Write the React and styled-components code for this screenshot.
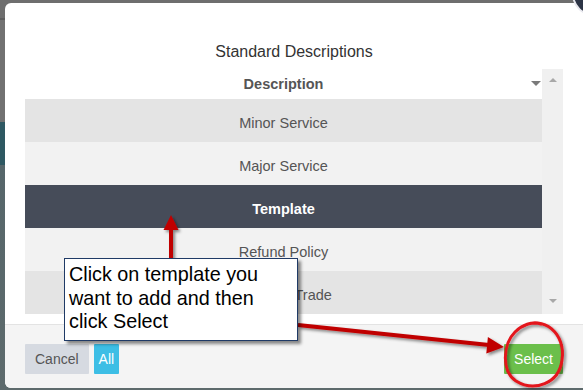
import React from "react";
import styled, { createGlobalStyle } from "styled-components";

const Global = createGlobalStyle`
  html, body { margin: 0; padding: 0; }
  body { font-family: "Liberation Sans", Arial, sans-serif; overflow: hidden; }
`;

const Backdrop = styled.div`
  position: relative;
  width: 583px;
  height: 390px;
  overflow: hidden;
  padding: 3px 0 0 5px;
  box-sizing: border-box;
  background:
    linear-gradient(to bottom,
      #6e6e6e 0px, #6e6e6e 18px, #5e5e5e 18px, #5e5e5e 20px,
      #717171 20px, #717171 122px, #2e5862 122px, #2e5862 165px,
      #56666a 165px, #5d6a6c 390px);
`;

const Modal = styled.div`
  width: 578px;
  height: 385px;
  background: #fff;
  border-radius: 6px 0 0 6px;
  display: flex;
  flex-direction: column;
  overflow: hidden;
`;

const Body = styled.div`
  padding: 39px 20px 0 20px;
  display: flex;
  flex-direction: column;
  flex-shrink: 0;
`;

const Title = styled.div`
  font-size: 16px;
  line-height: 20px;
  color: #333;
  text-align: center;
  margin-bottom: 7px;
`;

const GridWrap = styled.div`
  display: flex;
  height: 245px;
  flex-shrink: 0;
`;

const Table = styled.div`
  flex: 1;
  display: flex;
  flex-direction: column;
`;

const HeaderRow = styled.div`
  position: relative;
  height: 30px;
  flex-shrink: 0;
  display: flex;
  align-items: center;
  justify-content: center;
  font-size: 14.5px;
  font-weight: bold;
  color: #555;
`;

const SortCaret = styled.span`
  position: absolute;
  right: 1px;
  top: 12px;
  width: 0;
  height: 0;
  border-left: 5px solid transparent;
  border-right: 5px solid transparent;
  border-top: 5px solid #7a7a7a;
`;

const Row = styled.div`
  height: 43px;
  box-sizing: border-box;
  padding-top: 5px;
  flex-shrink: 0;
  display: flex;
  align-items: center;
  justify-content: center;
  font-size: 14.5px;
  background: ${(p) => (p.$selected ? "#464c59" : p.$alt ? "#e4e4e4" : "#f2f2f2")};
  color: ${(p) => (p.$selected ? "#fff" : "#555")};
  font-weight: ${(p) => (p.$selected ? "bold" : "normal")};
`;

const Scrollbar = styled.div`
  width: 21px;
  background: #f0f0f0;
  display: flex;
  flex-direction: column;
  justify-content: space-between;
  align-items: center;
  padding: 9px 0 11px;
  box-sizing: border-box;
`;

const ScrollArrow = styled.span`
  width: 0;
  height: 0;
  border-left: 4px solid transparent;
  border-right: 4px solid transparent;
  ${(p) =>
    p.$up
      ? "border-bottom: 4px solid #a8a8a8;"
      : "border-top: 4px solid #a8a8a8;"}
`;

const Footer = styled.div`
  margin-top: 10px;
  flex: 1;
  background: #f4f4f4;
  border-top: 1px solid #e3e3e3;
  display: flex;
  align-items: center;
  padding: 5px 20px 0 20px;
  gap: 5px;
`;

const Button = styled.button`
  height: 30px;
  border: none;
  border-radius: 1px;
  padding: 0 ${(p) => p.$pad || 10}px;
  font-family: "Liberation Sans", Arial, sans-serif;
  font-size: 14px;
  background: ${(p) => p.$bg};
  color: ${(p) => p.$fg};
  margin-left: ${(p) => (p.$push ? "auto" : "0")};
`;

const CloseBtn = styled.div`
  position: absolute;
  left: 572px;
  top: -28px;
  width: 44px;
  height: 44px;
  border-radius: 50%;
  background: #2c3445;
  border: 2px solid #e8e8ee;
  box-sizing: border-box;
`;

const Callout = styled.div`
  position: absolute;
  left: 64px;
  top: 258px;
  width: 234px;
  height: 83px;
  box-sizing: border-box;
  background: #fff;
  border: 1px solid #1f3a66;
  box-shadow: 3px 3px 3px rgba(0, 0, 0, 0.45);
  padding: 4px 2px 0 4px;
  font-size: 19.8px;
  line-height: 23.5px;
  color: #000;
  white-space: nowrap;
`;

const Overlay = styled.svg`
  position: absolute;
  left: 0;
  top: 0;
  width: 583px;
  height: 390px;
  pointer-events: none;
`;

const rows = [
  { label: "Minor Service", alt: true },
  { label: "Major Service" },
  { label: "Template", selected: true },
  { label: "Refund Policy" },
  { label: "Terms of Trade", alt: true },
];

export default function App() {
  return (
    <>
      <Global />
      <Backdrop>
        <Modal>
          <Body>
            <Title>Standard Descriptions</Title>
            <GridWrap>
              <Table>
                <HeaderRow>
                  Description
                  <SortCaret />
                </HeaderRow>
                {rows.map((r) => (
                  <Row key={r.label} $alt={r.alt} $selected={r.selected}>
                    {r.label}
                  </Row>
                ))}
              </Table>
              <Scrollbar>
                <ScrollArrow $up />
                <ScrollArrow />
              </Scrollbar>
            </GridWrap>
          </Body>
          <Footer>
            <Button $bg="#d6dae1" $fg="#555">Cancel</Button>
            <Button $bg="#3dbee5" $fg="#fff" $pad={5}>All</Button>
            <Button $bg="#6bbf4b" $fg="#fff" $push>Select</Button>
          </Footer>
        </Modal>
        <CloseBtn />
        <Overlay viewBox="0 0 583 390">
          <defs>
            <filter id="sh" x="-20%" y="-20%" width="140%" height="140%">
              <feDropShadow dx="2" dy="2" stdDeviation="1.5" floodColor="#000" floodOpacity="0.45" />
            </filter>
          </defs>
          <g filter="url(#sh)" fill="#c00000" stroke="none">
            <rect x="169" y="229" width="4" height="30" />
            <polygon points="171,215 163.5,230 178.5,230" />
            <line x1="298" y1="325" x2="489" y2="345" stroke="#c00000" strokeWidth="4" />
            <polygon points="504,347 486.3,353.5 487.9,337" />
          </g>
          <path
            d="M 521 327 C 544 314, 566 334, 562 360 C 559 384, 534 392, 516 381 C 501 371, 503 344, 515 332 C 522 325, 532 321, 541 324"
            fill="none"
            stroke="#e3141c"
            strokeWidth="3"
            strokeLinecap="round"
            filter="url(#sh)"
          />
        </Overlay>
        <Callout>
          Click on template you
          <br />
          want to add and then
          <br />
          click Select
        </Callout>
      </Backdrop>
    </>
  );
}
